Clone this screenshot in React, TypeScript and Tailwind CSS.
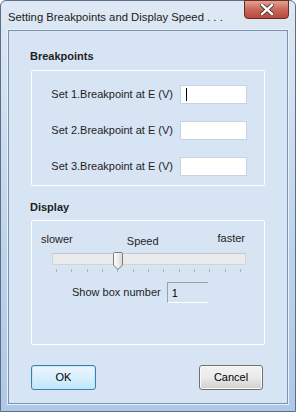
import { FC } from 'react';

const font = { fontFamily: '"Liberation Sans", Arial, sans-serif' };

const BreakpointRow: FC<{ n: number; caret?: boolean }> = ({ n, caret }) => (
    <div className="flex flex-row items-center justify-end pr-[17px] h-[19px]">
        <span className="text-[11px] text-[#1e1e1e] mr-[7px]">
            Set {n}.Breakpoint at E (V)
        </span>
        <div className="w-[67px] h-[19px] bg-white border border-[#c5d3e2] flex items-center pl-[5px]">
            {caret && <div className="w-px h-[13px] bg-black" />}
        </div>
    </div>
);

const Thumb = () => (
    <svg width="10" height="18" viewBox="0 0 10 18" className="absolute left-[60px] -top-[2px]">
        <defs>
            <linearGradient id="tg" x1="0" x2="1" y1="0" y2="0">
                <stop offset="0" stopColor="#ffffff" />
                <stop offset="1" stopColor="#d8d8d8" />
            </linearGradient>
        </defs>
        <path
            d="M1.5 0.5 H8.5 Q9.5 0.5 9.5 1.5 V13 L5 17.5 L0.5 13 V1.5 Q0.5 0.5 1.5 0.5 Z"
            fill="url(#tg)"
            stroke="#7a7a7a"
        />
    </svg>
);

export default function App() {
    return (
        <div
            style={font}
            className="w-[296px] h-[412px] relative flex flex-col border border-[#5b6f86] rounded-t-[6px] bg-gradient-to-b from-[#dfe9f5] via-[#c3d6ec] to-[#aec8e7]"
        >
            {/* title bar */}
            <div className="h-[29px] flex flex-row items-start shrink-0">
                <span className="pl-[7px] pt-[8px] text-[11.3px] text-[#1b1b1b]">
                    Setting Breakpoints and Display Speed . . .
                </span>
                <div className="ml-auto mr-[6px] w-[45px] h-[19px] -mt-px rounded-b-[4px] border border-[#6b2b26] bg-gradient-to-b from-[#e2a393] via-[#c8685a] to-[#b84a3c] flex items-center justify-center">
                    <svg width="14" height="11" viewBox="0 0 14 11">
                        <path
                            d="M2 1 L12 10 M12 1 L2 10"
                            stroke="#3a2a2a"
                            strokeWidth="4"
                            strokeLinecap="square"
                        />
                        <path
                            d="M2 1 L12 10 M12 1 L2 10"
                            stroke="#ffffff"
                            strokeWidth="2.4"
                            strokeLinecap="square"
                        />
                    </svg>
                </div>
            </div>

            {/* client area */}
            <div className="mx-[7px] h-[374px] border border-[#7b93b0] bg-[#d7e4f3] flex flex-col shadow-[0_0_0_1px_#e8f0fa]">
                <div className="pl-[21px] mt-[18px] text-[11px] font-bold text-[#1e1e1e] h-[14px] leading-[14px]">
                    Breakpoints
                </div>
                <div className="ml-[22px] w-[234px] mt-[7px] h-[116px] border border-white rounded-[2px] flex flex-col pt-[14px] gap-[17px]">
                    <BreakpointRow n={1} caret />
                    <BreakpointRow n={2} />
                    <BreakpointRow n={3} />
                </div>

                <div className="pl-[21px] mt-[14px] text-[11px] font-bold text-[#1e1e1e] h-[14px] leading-[14px]">
                    Display
                </div>
                <div className="ml-[22px] w-[234px] mt-[6px] h-[125px] border border-white rounded-[2px] flex flex-col">
                    <div className="flex flex-row items-start text-[11px] text-[#1e1e1e] h-[26px] pt-[10px] pl-[9px] pr-[19px]">
                        <span>slower</span>
                        <span className="ml-[54px] mt-[2px]">Speed</span>
                        <span className="ml-auto -mt-px">faster</span>
                    </div>
                    <div className="relative ml-[20px] w-[194px] h-[12px] mt-[6px] bg-[#e9ebec] border border-[#d2d5d8] border-t-[#c4c8cc]">
                        <Thumb />
                    </div>
                    <div className="ml-[24px] w-[185px] mt-[4px] h-[3px] flex flex-row justify-between">
                        {Array.from({ length: 13 }).map((_, i) => (
                            <div key={i} className="w-px h-[3px] bg-[#a9b4bf]" />
                        ))}
                    </div>
                    <div className="flex flex-row items-center mt-[10px] pl-[40px] h-[21px]">
                        <span className="text-[11px] text-[#1e1e1e] mr-[6px]">
                            Show box number
                        </span>
                        <div className="w-[41px] h-[21px] border-t border-l border-[#a0a0a0] border-b border-b-white text-[11px] text-black pl-[4px] pt-[2px]">
                            1
                        </div>
                    </div>
                </div>

                <div className="flex flex-row mt-[20px] pl-[22px] pr-[24px] justify-between">
                    <button className="w-[65px] h-[25px] rounded-[3px] border border-[#3c7fb1] bg-gradient-to-b from-[#eaf6fd] via-[#d9f0fc] to-[#bee6fd] shadow-[inset_0_0_0_1px_#c8e6f8] text-[11px] text-black">
                        OK
                    </button>
                    <button className="w-[64px] h-[25px] rounded-[3px] border border-[#707070] bg-gradient-to-b from-[#f2f2f2] via-[#ebebeb] to-[#cfcfcf] shadow-[inset_0_0_0_1px_#fbfbfb] text-[11px] text-black">
                        Cancel
                    </button>
                </div>
            </div>
        </div>
    );
}
